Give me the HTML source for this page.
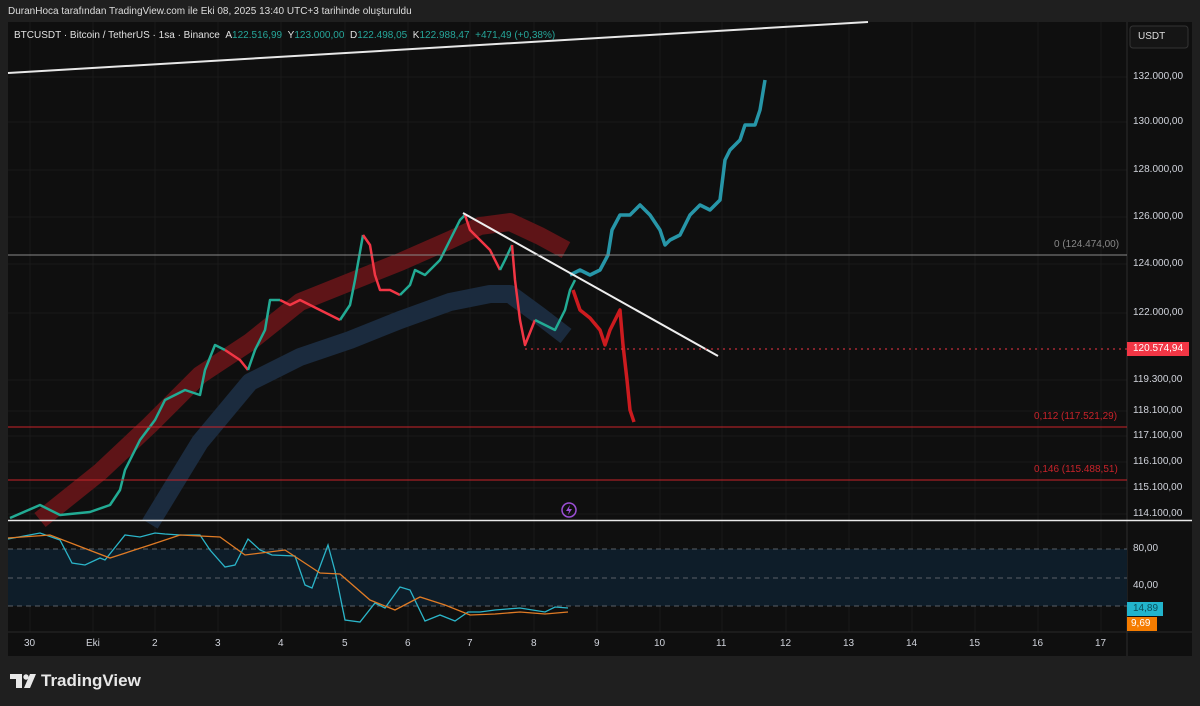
<!DOCTYPE html>
<html><head><meta charset="utf-8"><style>
html,body{margin:0;padding:0;background:#1f1f1f;width:1200px;height:706px;overflow:hidden;font-family:"Liberation Sans",sans-serif}
.t{position:absolute;color:#d1d4dc;font-size:10px;white-space:nowrap}
</style></head><body>
<div class="t" style="left:8px;top:6px;color:#ddd;font-size:10px">DuranHoca tarafından TradingView.com ile Eki 08, 2025 13:40 UTC+3 tarihinde oluşturuldu</div>
<svg width="1200" height="706" style="position:absolute;left:0;top:0" xmlns="http://www.w3.org/2000/svg">
<rect x="8" y="22" width="1184" height="634" fill="#0f0f0f"/>
<g stroke="#1a1a1a" stroke-width="1">
<line x1="30" y1="22" x2="30" y2="632"/><line x1="93" y1="22" x2="93" y2="632"/><line x1="155" y1="22" x2="155" y2="632"/><line x1="218" y1="22" x2="218" y2="632"/><line x1="281" y1="22" x2="281" y2="632"/><line x1="345" y1="22" x2="345" y2="632"/><line x1="408" y1="22" x2="408" y2="632"/><line x1="470" y1="22" x2="470" y2="632"/><line x1="534" y1="22" x2="534" y2="632"/><line x1="597" y1="22" x2="597" y2="632"/><line x1="660" y1="22" x2="660" y2="632"/><line x1="722" y1="22" x2="722" y2="632"/><line x1="786" y1="22" x2="786" y2="632"/><line x1="849" y1="22" x2="849" y2="632"/><line x1="912" y1="22" x2="912" y2="632"/><line x1="975" y1="22" x2="975" y2="632"/><line x1="1038" y1="22" x2="1038" y2="632"/><line x1="1101" y1="22" x2="1101" y2="632"/>
<line x1="8" y1="77" x2="1127" y2="77"/><line x1="8" y1="122" x2="1127" y2="122"/><line x1="8" y1="170" x2="1127" y2="170"/><line x1="8" y1="217" x2="1127" y2="217"/><line x1="8" y1="264" x2="1127" y2="264"/><line x1="8" y1="313" x2="1127" y2="313"/><line x1="8" y1="380" x2="1127" y2="380"/><line x1="8" y1="411" x2="1127" y2="411"/><line x1="8" y1="436" x2="1127" y2="436"/><line x1="8" y1="462" x2="1127" y2="462"/><line x1="8" y1="488" x2="1127" y2="488"/><line x1="8" y1="514" x2="1127" y2="514"/>
</g>
<line x1="8" y1="632" x2="1192" y2="632" stroke="#2a2a2a"/>
<line x1="1127" y1="22" x2="1127" y2="656" stroke="#2e2e2e"/>
<polyline points="40,520 100,472 150,425 200,375 250,342 300,302 350,282 400,262 450,240 480,226 510,222 540,236 566,250" fill="none" stroke="#5e1417" stroke-width="18" stroke-linejoin="round"/>
<polyline points="150,524 200,442 250,382 300,357 350,340 400,320 450,302 490,294 510,294 540,316 566,336" fill="none" stroke="#1b2b3e" stroke-width="18" stroke-linejoin="round"/>
<g fill="none" stroke-width="2.5" stroke-linejoin="round">
<polyline stroke="#22ab94" points="10,518 40,505 60,515 90,512 110,505 120,490 125,470 140,440 155,420 165,400 175,395 185,390 200,395 205,370 215,345 225,350"/>
<polyline stroke="#f23645" points="225,350 240,360 248,370"/>
<polyline stroke="#22ab94" points="248,370 255,350 265,330 270,300 280,300"/>
<polyline stroke="#f23645" points="280,300 290,305 300,300 310,305 320,310 330,315 340,320"/>
<polyline stroke="#22ab94" points="340,320 350,305 355,280 363,235"/>
<polyline stroke="#f23645" points="363,235 370,245 375,275 380,290 390,290 400,295"/>
<polyline stroke="#22ab94" points="400,295 410,285 415,270 425,275 440,260 450,240 460,220 465,215"/>
<polyline stroke="#f23645" points="465,215 470,230 480,240 490,250 500,270"/>
<polyline stroke="#22ab94" points="500,270 505,260 512,245"/>
<polyline stroke="#f23645" points="512,245 515,280 520,320 525,345 535,320"/>
<polyline stroke="#22ab94" points="535,320 545,325 555,330 565,310 570,290 575,280"/>
<polyline stroke="#cc1b1f" stroke-width="3.5" points="573,290 580,310 590,318 600,330 605,345 610,330 620,310 623,345 627,380 630,410 634,422"/>
<polyline stroke="#2796a8" stroke-width="3.5" points="570,275 580,270 590,275 600,270 608,255 612,230 620,215 630,215 640,205 650,215 660,230 665,245 670,240 680,235 690,215 700,205 710,210 720,200 725,160 730,150 740,140 745,125 755,125 760,110 765,80"/>
</g>
<line x1="8" y1="73" x2="868" y2="22" stroke="#e8e8e8" stroke-width="2"/>
<line x1="463" y1="213" x2="718" y2="356" stroke="#eeeeee" stroke-width="2"/>
<line x1="8" y1="255" x2="1127" y2="255" stroke="#8a8a8a"/>
<line x1="525" y1="349" x2="1127" y2="349" stroke="#f23645" stroke-dasharray="2,4"/>
<line x1="8" y1="427" x2="1127" y2="427" stroke="#c8232a"/>
<line x1="8" y1="480" x2="1127" y2="480" stroke="#c8232a"/>
<line x1="8" y1="520.5" x2="1192" y2="520.5" stroke="#e8e8e8" stroke-width="1.5"/>
<circle cx="569" cy="510" r="7" fill="none" stroke="#9c4fd6" stroke-width="1.5"/>
<path d="M570,505 L566,511 L569,511 L568,515 L572,509 L569,509 Z" fill="#9c4fd6"/>
<rect x="8" y="549" width="1119" height="57" fill="#0e1d29"/>
<g stroke="#5a5f66" stroke-dasharray="5,4"><line x1="8" y1="549" x2="1127" y2="549"/><line x1="8" y1="578" x2="1127" y2="578"/><line x1="8" y1="606" x2="1127" y2="606"/></g>
<polyline fill="none" stroke="#2bb5c9" stroke-width="1.3" points="8,539 40,533 60,540 72,563 85,565 100,558 105,560 125,535 140,537 155,533 165,534 180,535 200,535 210,550 225,567 235,565 248,539 260,550 272,555 295,556 305,585 312,588 328,545 335,571 345,620 360,622 375,603 385,608 400,587 410,590 425,621 440,615 455,621 468,612 480,612 495,610 520,608 545,612 555,607 568,608"/>
<polyline fill="none" stroke="#e07b25" stroke-width="1.3" points="8,538 50,535 110,558 150,545 180,535 220,537 245,555 285,550 320,573 340,574 370,600 395,610 420,597 445,605 470,615 495,614 520,612 545,614 568,612"/>
<rect x="1127" y="602" width="36" height="14" fill="#22b4cc"/>
<rect x="1127" y="617" width="30" height="14" fill="#f57c00"/>
<rect x="1127" y="342" width="62" height="14" fill="#f23645"/>
<rect x="1130" y="26" width="58" height="22" rx="3" fill="#151515" stroke="#333"/>
<path d="M10,674 h12 v14 h-6 v-9 h-6 Z" fill="#e8e8e8"/>
<circle cx="26" cy="677" r="2.7" fill="#e8e8e8"/>
<path d="M30,674 h6 l-6,14 h-6 Z" fill="#e8e8e8"/>
</svg>
<div class="t" style="left:14px;top:30px;color:#e0e0e0">BTCUSDT · Bitcoin / TetherUS · 1sa · Binance &nbsp;A<span style="color:#26a69a">122.516,99</span> &nbsp;Y<span style="color:#26a69a">123.000,00</span> &nbsp;D<span style="color:#26a69a">122.498,05</span> &nbsp;K<span style="color:#26a69a">122.988,47</span> &nbsp;<span style="color:#26a69a">+471,49 (+0,38%)</span></div>
<div class="t" style="left:1138px;top:31px;color:#ddd">USDT</div>
<div class="t" style="left:1133px;top:71px">132.000,00</div>
<div class="t" style="left:1133px;top:116px">130.000,00</div>
<div class="t" style="left:1133px;top:164px">128.000,00</div>
<div class="t" style="left:1133px;top:211px">126.000,00</div>
<div class="t" style="left:1133px;top:258px">124.000,00</div>
<div class="t" style="left:1133px;top:307px">122.000,00</div>
<div class="t" style="left:1133px;top:343px;color:#fff">120.574,94</div>
<div class="t" style="left:1133px;top:374px">119.300,00</div>
<div class="t" style="left:1133px;top:405px">118.100,00</div>
<div class="t" style="left:1133px;top:430px">117.100,00</div>
<div class="t" style="left:1133px;top:456px">116.100,00</div>
<div class="t" style="left:1133px;top:482px">115.100,00</div>
<div class="t" style="left:1133px;top:508px">114.100,00</div>
<div class="t" style="left:1133px;top:543px">80,00</div>
<div class="t" style="left:1133px;top:580px">40,00</div>
<div class="t" style="left:1133px;top:603px;color:#0b4f5c">14,89</div>
<div class="t" style="left:1131px;top:618px;color:#fff">9,69</div>
<div class="t" style="left:1054px;top:239px;color:#888">0 (124.474,00)</div>
<div class="t" style="left:1034px;top:411px;color:#c8232a">0,112 (117.521,29)</div>
<div class="t" style="left:1034px;top:464px;color:#c8232a">0,146 (115.488,51)</div>
<div class="t" style="left:24px;top:638px">30</div>
<div class="t" style="left:86px;top:638px">Eki</div>
<div class="t" style="left:152px;top:638px">2</div>
<div class="t" style="left:215px;top:638px">3</div>
<div class="t" style="left:278px;top:638px">4</div>
<div class="t" style="left:342px;top:638px">5</div>
<div class="t" style="left:405px;top:638px">6</div>
<div class="t" style="left:467px;top:638px">7</div>
<div class="t" style="left:531px;top:638px">8</div>
<div class="t" style="left:594px;top:638px">9</div>
<div class="t" style="left:654px;top:638px">10</div>
<div class="t" style="left:716px;top:638px">11</div>
<div class="t" style="left:780px;top:638px">12</div>
<div class="t" style="left:843px;top:638px">13</div>
<div class="t" style="left:906px;top:638px">14</div>
<div class="t" style="left:969px;top:638px">15</div>
<div class="t" style="left:1032px;top:638px">16</div>
<div class="t" style="left:1095px;top:638px">17</div>
<div class="t" style="left:41px;top:671px;font-size:17px;font-weight:bold;color:#e8e8e8">TradingView</div>
</body></html>
